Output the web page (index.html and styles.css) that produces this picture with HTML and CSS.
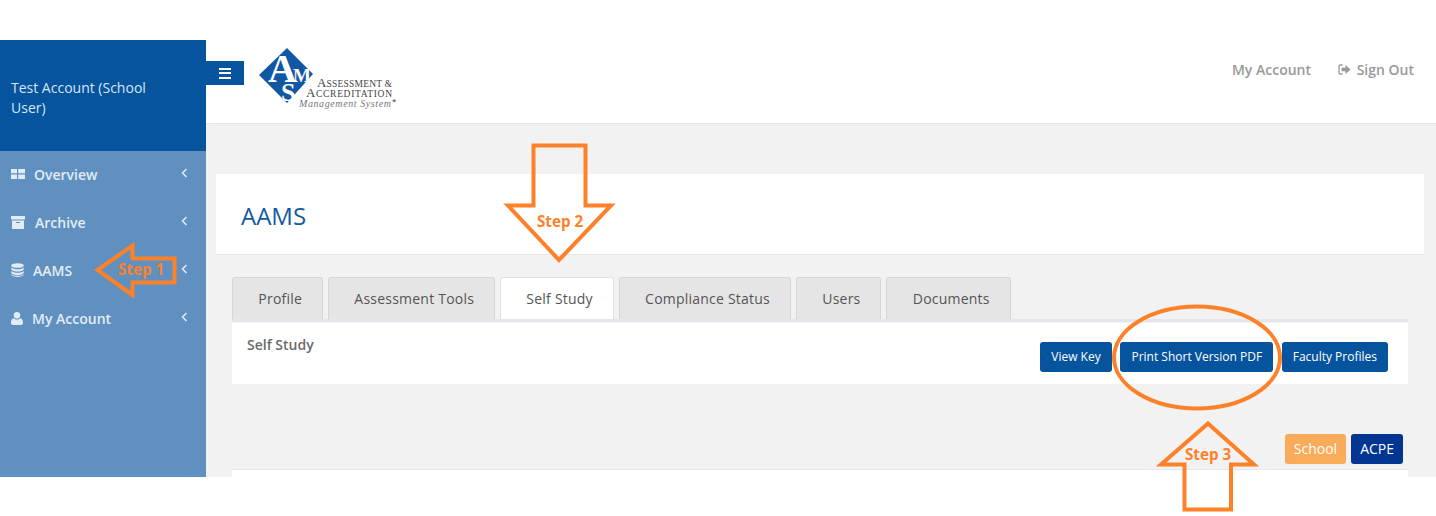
FILE: index.html
```html
<!DOCTYPE html>
<html lang="en">
<head>
  <meta charset="UTF-8">
  <meta name="viewport" content="width=device-width, initial-scale=1.0">
  <title>AAMS</title>
  <link rel="stylesheet" href="styles.css">
</head>
<body>
  <div class="app">
    <aside class="sidebar">
      <div class="user-box">Test Account (School User)</div>
      <nav class="side-menu">
        <a class="side-item">
          <svg class="side-icon" width="14" height="12" viewBox="0 0 14 12"><path d="M0 1h6v4.300H0zM7.200 1H14v4.300H7.200zM0 6.500h6V11H0zM7.200 6.500H14V11H7.200z"/></svg>
          <span class="side-label">Overview</span>
          <svg class="chevron" width="7" height="10" viewBox="0 0 7 10"><path d="M5.500 1 1.500 5l4 4" /></svg>
        </a>
        <a class="side-item">
          <svg class="side-icon" width="15" height="13" viewBox="0 0 15 13"><path d="M0 0h14v3.500H0zM1 4.500h12V13H1z"/><path class="cut" d="M5 6h4v1H5z"/></svg>
          <span class="side-label">Archive</span>
          <svg class="chevron" width="7" height="10" viewBox="0 0 7 10"><path d="M5.500 1 1.500 5l4 4" /></svg>
        </a>
        <a class="side-item">
          <svg class="side-icon" width="13" height="14" viewBox="0 0 13 14"><ellipse cx="6.500" cy="2.500" rx="6.200" ry="2.300"/><path d="M.3 4.200c1 1.500 3.500 2 6.200 2s5.200-.5 6.200-2v2.300c-1 1.500-3.500 2-6.200 2s-5.200-.5-6.200-2zM.3 7.700c1 1.500 3.500 2 6.200 2s5.200-.5 6.200-2V10c-1 1.500-3.500 2-6.200 2S1.300 11.500.3 10zM.3 10.900c1 1.400 3.500 1.900 6.200 1.900s5.200-.5 6.200-1.900v.9c-.8 1.400-3.500 2.100-6.200 2.100S1.100 13.200.3 11.800z"/></svg>
          <span class="side-label">AAMS</span>
          <svg class="chevron" width="7" height="10" viewBox="0 0 7 10"><path d="M5.500 1 1.500 5l4 4" /></svg>
        </a>
        <a class="side-item">
          <svg class="side-icon" width="12" height="13" viewBox="0 0 12 13"><circle cx="6" cy="3.300" r="3.200"/><path d="M0 11c0-3 1-4.600 2.800-4.800C3.600 7 4.700 7.500 6 7.500s2.400-.5 3.200-1.300C11 6.400 12 8 12 11c0 1.200-.8 2-2 2H2c-1.200 0-2-.8-2-2z"/></svg>
          <span class="side-label">My Account</span>
          <svg class="chevron" width="7" height="10" viewBox="0 0 7 10"><path d="M5.500 1 1.500 5l4 4" /></svg>
        </a>
      </nav>
    </aside>

    <div class="main">
      <header class="top-bar">
        <button class="menu-toggle"><span></span><span></span><span></span></button>
        <svg class="logo" width="142" height="70" viewBox="0 -6 142 70">
          <path class="logo-mark" d="M30 0 56 26 30 55 2 27z"/>
          <text class="logo-letters"><tspan class="logo-a" x="11" y="34">A</tspan><tspan class="logo-m" x="36" y="34">M</tspan><tspan class="logo-s" x="24" y="53">S</tspan></text>
          <text class="logo-line" x="60" y="39" textLength="75">A<tspan class="small-caps">SSESSMENT &amp;</tspan></text>
          <text class="logo-line" x="49" y="49" textLength="86">A<tspan class="small-caps">CCREDITATION</tspan></text>
          <text class="logo-sub" x="42" y="59" textLength="92">Management System</text>
          <text class="logo-reg" x="135" y="56">*</text>
        </svg>
        <div class="top-links">
          <a class="top-link">My Account</a>
          <a class="top-link">
            <svg class="signout-icon" width="13" height="11" viewBox="0 0 13 11"><path d="M4.500 1H2.300C1.500 1 1 1.500 1 2.300v6.400C1 9.500 1.500 10 2.300 10h2.200" fill="none" stroke="#999" stroke-width="1.300"/><path d="M3.500 3.700h4V1l5 4.500-5 4.500V7.300h-4z" fill="#999"/></svg>
            Sign Out
          </a>
        </div>
      </header>

      <div class="content">
        <div class="page-title"><h1>AAMS</h1></div>

        <div class="tab-area">
          <ul class="tabs">
            <li class="tab">Profile</li>
            <li class="tab">Assessment Tools</li>
            <li class="tab active">Self Study</li>
            <li class="tab">Compliance Status</li>
            <li class="tab">Users</li>
            <li class="tab">Documents</li>
          </ul>
          <div class="tab-panel">
            <span class="panel-title">Self Study</span>
            <div class="panel-actions">
              <button class="btn">View Key</button>
              <button class="btn">Print Short Version PDF</button>
              <button class="btn">Faculty Profiles</button>
            </div>
          </div>
          <div class="filter-row">
            <button class="pill pill-school">School</button>
            <button class="pill pill-acpe">ACPE</button>
          </div>
          <div class="next-panel"></div>
        </div>
      </div>
    </div>
  </div>

  <!-- hand drawn step markers over the screenshot -->
  <svg class="markers" width="1436" height="516" viewBox="0 0 1436 516">
    <path d="M97.500 270 132.500 245.500V258.500H174.500V282.500H132.500V295z"/>
    <path d="M533.500 145.500H585.500V205.500H611L559 260 508 205.500H533.500z"/>
    <path d="M1208 423.500 1254 464.500H1231V509.500H1184.500V464.500H1161z"/>
    <ellipse cx="1197" cy="357.500" rx="83" ry="51"/>
    <text x="118" y="274.500">Step 1</text>
    <text x="537" y="227">Step 2</text>
    <text x="1185" y="460">Step 3</text>
  </svg>
</body>
</html>
```

FILE: styles.css
```css
* {
  box-sizing: border-box;
}

html, body {
  height: 516px;
  overflow: hidden;
}

body {
  margin: 0;
  padding-top: 40px;
  position: relative;
  background: #fff;
  font-family: 'Open Sans', sans-serif;
  font-size: 14px;
  color: #666;
}

.app {
  display: flex;
  height: 437px;
  overflow: hidden;
}

/* Sidebar */
.sidebar {
  width: 206px;
  flex-shrink: 0;
  background: #5f90bf;
}

.user-box {
  height: 111px;
  padding: 38px 40px 0 11px;
  background: #07549e;
  color: #d5e6f5;
  line-height: 20px;
}

.side-menu {
  display: flex;
  flex-direction: column;
  margin-top: -1px;
}

.side-item {
  height: 48px;
  display: flex;
  align-items: center;
  padding: 0 18px 0 11px;
  color: #e3ecf5;
  font-weight: 600;
}

.side-icon {
  fill: #e3ecf5;
  flex-shrink: 0;
}

.side-icon .cut {
  fill: #5f90bf;
}

.side-label {
  margin-left: 9px;
}

.chevron {
  margin: -3px 0 0 auto;
  fill: none;
  stroke: #e3ecf5;
  stroke-width: 1.500;
}

/* Top bar */
.main {
  flex: 1;
  display: flex;
  flex-direction: column;
  min-width: 0;
}

.top-bar {
  height: 84px;
  flex-shrink: 0;
  display: flex;
  align-items: flex-start;
  background: #fff;
  border-bottom: 1px solid #e6e6e6;
}

.menu-toggle {
  width: 38px;
  height: 24px;
  margin-top: 21px;
  display: flex;
  flex-direction: column;
  align-items: center;
  justify-content: center;
  gap: 2.500px;
  padding: 0;
  border: none;
  background: #07549e;
}

.menu-toggle span {
  width: 12px;
  height: 2px;
  background: #fff;
}

.logo {
  margin: 2px 0 0 13px;
}

.logo-mark {
  fill: #1058a4;
}

.logo-letters {
  font-family: 'Liberation Serif', serif;
  font-weight: 700;
  fill: #fff;
}

.logo-a {
  font-size: 40px;
}

.logo-m {
  font-size: 19px;
}

.logo-s {
  font-size: 26px;
}

.logo-line {
  font-family: 'Liberation Serif', serif;
  font-size: 13px;
  fill: #444;
}

.small-caps {
  font-size: 9.500px;
}

.logo-sub {
  font-family: 'Liberation Serif', serif;
  font-style: italic;
  font-size: 10px;
  fill: #777;
}

.logo-reg {
  font-size: 8px;
  fill: #333;
}

.top-links {
  margin-left: auto;
  display: flex;
  gap: 27px;
  padding: 20px 22px 0 0;
}

.top-link {
  color: #999;
  font-weight: 600;
  line-height: 20px;
}

.signout-icon {
  margin-right: 2px;
}

/* Content */
.content {
  flex: 1;
  background: #f2f2f2;
  padding: 50px 12px 0 10px;
  overflow: hidden;
}

.page-title {
  height: 81px;
  padding: 25px 25px 0;
  background: #fff;
  border-bottom: 1px solid #e6e6e6;
}

.page-title h1 {
  margin: 0;
  font-size: 24px;
  font-weight: 400;
  line-height: 34px;
  color: #15599f;
}

.tab-area {
  padding: 22px 16px 0;
}

.tabs {
  display: flex;
  gap: 5px;
  height: 45px;
  margin: 0;
  padding: 0;
  list-style: none;
  border-bottom: 3px solid #e3e6ea;
}

.tab {
  height: 42px;
  padding: 0 20px 0 25.300px;
  background: #e5e5e5;
  border: 1px solid #d6d6d6;
  border-bottom: none;
  border-radius: 3px 3px 0 0;
  line-height: 41px;
  letter-spacing: .22px;
  color: #555;
}

.tab.active {
  background: #fff;
  border-color: #e2e2e2;
}

.tab-panel {
  height: 61px;
  margin-top: 1px;
  display: flex;
  justify-content: space-between;
  padding: 12px 20px 0 15px;
  background: #fff;
}

.panel-title {
  font-weight: 600;
  line-height: 20px;
  color: #6b6b6b;
}

.panel-actions {
  display: flex;
  align-items: flex-start;
  gap: 8.500px;
  margin-top: 7px;
}

.btn {
  height: 30px;
  min-width: 72px;
  padding: 0 11px 2px;
  border: none;
  border-radius: 3px;
  background: #07549e;
  color: #fff;
  font-family: inherit;
  font-size: 12px;
  font-weight: 500;
}

.filter-row {
  display: flex;
  justify-content: flex-end;
  gap: 5px;
  height: 85px;
  padding: 50px 5px 0 0;
}

.pill {
  height: 30px;
  padding: 0 9px 2px;
  border: none;
  border-radius: 3px;
  font-family: inherit;
  font-size: 14px;
  color: #fff;
}

.pill-school {
  background: #f9ab59;
}

.pill-acpe {
  background: #033592;
}

.next-panel {
  height: 20px;
  background: #fff;
  border-top: 1px solid #e6e6e6;
}

/* Step markers */
.markers {
  position: absolute;
  left: 0;
  top: 0;
  pointer-events: none;
}

.markers path, .markers ellipse {
  fill: none;
  stroke: #fd8129;
  stroke-width: 4;
}

.markers text {
  font-family: 'Open Sans', sans-serif;
  font-size: 15.200px;
  font-weight: 700;
  fill: #fd8129;
}
```
